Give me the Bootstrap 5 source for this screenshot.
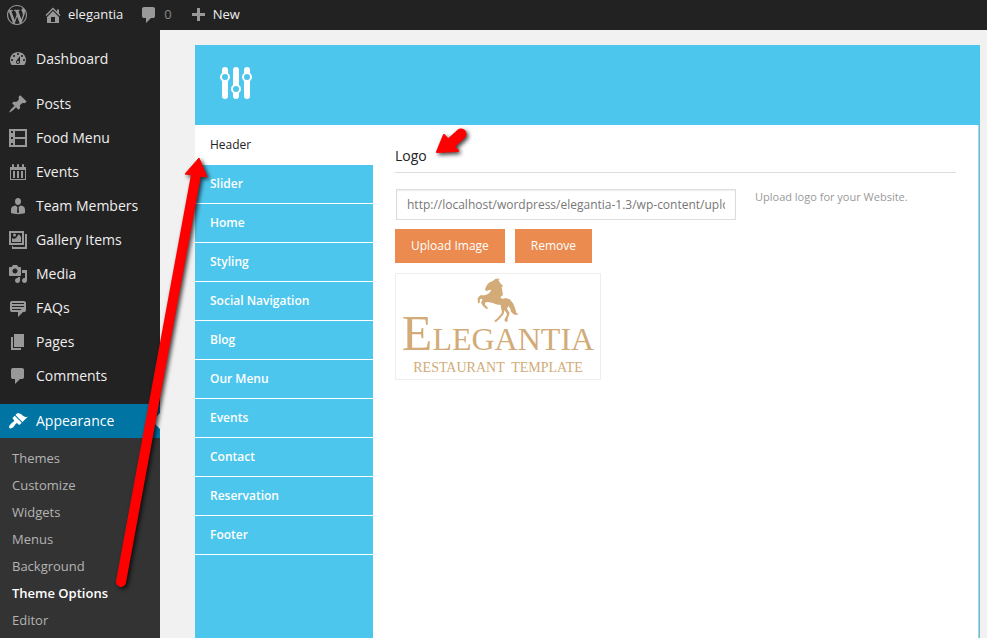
<!DOCTYPE html>
<html lang="en">
<head>
<meta charset="utf-8">
<meta name="viewport" content="width=device-width, initial-scale=1">
<title>Theme Options</title>
<link href="https://cdn.jsdelivr.net/npm/bootstrap@5.3.0/dist/css/bootstrap.min.css" rel="stylesheet">
<style>
body{font-family:"Open Sans","Noto Sans",sans-serif;font-size:14px;background:#f1f1f1;color:#333}
a{text-decoration:none}
svg{fill:#999;flex:none;display:block}
.admin-bar{background:#222;height:30px;font-size:13px;padding-left:7px}
.admin-bar a{color:#eee;gap:5px}
.admin-bar .count{color:#888}
.side-menu{background:#222;width:160px;padding-top:12px}
.side-menu .item{height:34px;padding:0 0 2px 8px;color:#eee}
.side-menu .item svg{margin-top:2px}
.side-menu .gap-item{margin-bottom:11px}
.side-menu .current{background:#0074a2;color:#fff}
.side-menu .current svg{fill:#fff}
.side-menu .current::after{content:"";position:absolute;right:0;top:9px;border:8px solid transparent;border-right-color:#f1f1f1}
.submenu{background:#333;padding:7px 12px;font-size:13px}
.submenu a{color:#b4b4b4;line-height:27px}
.submenu a.chosen{color:#fff;font-weight:600}
.main-area{padding:15px 7px 0 35px}
.panel-head{background:#4dc6ed;height:80px;padding:22px 25px}
.panel-head svg{fill:#fff}
.panel-body{background:#fff;border-right:1px solid #4dc6ed}
.tab-list{background:#4dc6ed;width:178px;font-size:12px}
.tab-list a{color:#fff;font-weight:600;line-height:38px;padding-left:15px;border-bottom:1px solid #fff}
.tab-list a.open{background:#fff;color:#222;font-weight:400;line-height:39px}
.options{border-right:1px solid #c8c8c8;padding:20px 22px}
.options h1{font-size:14px;line-height:22px;color:#222;padding-bottom:5px;border-bottom:1px solid #ddd;margin-bottom:16px}
.url-box{width:340px;height:31px;border:1px solid #ddd;border-radius:0;font-size:12px;color:#777;padding:0 10px;margin-left:1px;box-shadow:inset 0 1px 2px rgba(0,0,0,.07)}
.hint{font-size:11px;line-height:16px;color:#999;padding-left:19px}
.btn-row{gap:10px;margin:9px 0 10px}
.btn-flat{background:#ec8b4f;color:#fff;border:0;border-radius:0;font-size:12px;line-height:18px;padding:8px 16px}
.btn-flat:hover{background:#d97b41;color:#fff}
.brand-box{width:206px;height:107px;border:1px solid #eee;color:#d2ab78;font-family:"Liberation Serif",serif}
.brand-box svg{fill:#d2ab78}
.brand-name{font-size:32px;line-height:1;height:34px;margin-top:-14px}
.brand-name span{font-size:50px}
.brand-tag{font-size:14px;line-height:16px;white-space:pre;margin-top:18px}
.arrows{left:0;top:0;pointer-events:none;filter:drop-shadow(2px 2px 2px rgba(0,0,0,.75))}
.arrows path{fill:red}
.arrows line{stroke:red;stroke-linecap:round}
</style>
<script src="https://cdn.jsdelivr.net/npm/bootstrap@5.3.0/dist/js/bootstrap.bundle.min.js"></script>
</head>
<body>
<div class="d-flex flex-column min-vh-100 position-relative">
<header class="admin-bar d-flex align-items-center">
  <a href="#" aria-label="WordPress" class="pe-3"><svg width="20" height="20" viewBox="0 0 20 20"><path d="M20 10c0-5.51-4.49-10-10-10C4.48 0 0 4.49 0 10c0 5.52 4.48 10 10 10 5.51 0 10-4.48 10-10zM7.78 15.37L4.37 6.22c.55-.02 1.17-.08 1.17-.08.5-.06.44-1.13-.06-1.11 0 0-1.45.11-2.37.11-.18 0-.37 0-.58-.01C4.12 2.69 6.87 1.11 10 1.11c2.33 0 4.45.87 6.05 2.34-.68-.11-1.65.39-1.65 1.58 0 .74.45 1.36.9 2.1.35.61.55 1.36.55 2.46 0 1.49-1.4 5-1.4 5l-3.03-8.37c.54-.02.82-.17.82-.17.5-.05.44-1.25-.06-1.22 0 0-1.44.12-2.38.12-.87 0-2.33-.12-2.33-.12-.5-.03-.56 1.2-.06 1.22l.92.08 1.26 3.41zM17.41 10c.24-.64.74-1.87.43-4.25.7 1.29 1.05 2.71 1.05 4.25 0 3.29-1.73 6.24-4.4 7.78.97-2.59 1.94-5.2 2.92-7.78zM6.1 18.09C3.12 16.65 1.11 13.53 1.11 10c0-1.3.23-2.48.72-3.59C3.25 10.3 4.67 14.2 6.1 18.09zm4.03-6.63l2.58 6.98c-.86.29-1.76.45-2.71.45-.79 0-1.57-.11-2.29-.33.81-2.38 1.62-4.74 2.42-7.1z"/></svg></a>
  <a href="#" class="d-flex align-items-center pe-3"><svg width="20" height="20" viewBox="0 0 20 20"><path fill-rule="evenodd" d="M16 8.5l1.53 1.53-1.06 1.06L10 4.6l-6.47 6.49-1.06-1.06L10 2.5l4 4v-2h2v4zm-6-2.46l6 5.99V18H4v-5.97zM12 17v-5H8v5h4z"/></svg>elegantia</a>
  <a href="#" aria-label="Comments" class="d-flex align-items-center pe-3"><svg width="20" height="20" viewBox="0 0 20 20"><path d="M5 2h9q.82 0 1.41.59T16 4v7q0 .82-.59 1.41T14 13h-2l-5 5v-5H5q-.82 0-1.41-.59T3 11V4q0-.82.59-1.41T5 2z"/></svg><span class="count">0</span></a>
  <a href="#" class="d-flex align-items-center"><svg width="20" height="20" viewBox="0 0 20 20"><path d="M17 8v3h-5v5H9v-5H4V8h5V3h3v5h5z"/></svg>New</a>
</header>
<div class="d-flex flex-grow-1">
<nav class="side-menu flex-shrink-0 d-flex flex-column" aria-label="Admin menu">
  <a href="#" class="item gap-item d-flex align-items-center gap-2"><svg width="20" height="20" viewBox="0 0 20 20"><path d="M3.76 16h12.48c1.1-1.37 1.76-3.11 1.76-5 0-4.42-3.58-8-8-8s-8 3.58-8 8c0 1.89.66 3.63 1.76 5zM10 4c.55 0 1 .45 1 1s-.45 1-1 1-1-.45-1-1 .45-1 1-1zM6 6c.55 0 1 .45 1 1s-.45 1-1 1-1-.45-1-1 .45-1 1-1zm8 0c.55 0 1 .45 1 1s-.45 1-1 1-1-.45-1-1 .45-1 1-1zm-5.37 5.55L12 7v6c0 1.1-.9 2-2 2s-2-.9-2-2c0-.57.24-1.08.63-1.45zM4 10c.55 0 1 .45 1 1s-.45 1-1 1-1-.45-1-1 .45-1 1-1zm12 0c.55 0 1 .45 1 1s-.45 1-1 1-1-.45-1-1 .45-1 1-1zm-5 3c0-.55-.45-1-1-1s-1 .45-1 1 .45 1 1 1 1-.45 1-1z" fill-rule="evenodd"/></svg>Dashboard</a>
  <a href="#" class="item d-flex align-items-center gap-2"><svg width="20" height="20" viewBox="0 0 20 20"><path d="M10.44 3.02l1.82-1.82 6.36 6.35-1.83 1.82c-1.05-.68-2.48-.57-3.41.36l-.75.75c-.92.93-1.04 2.35-.35 3.41l-1.83 1.82-2.41-2.41-2.8 2.79c-.42.42-3.38 2.71-3.8 2.29s1.86-3.39 2.28-3.81l2.79-2.79L4.1 9.36l1.83-1.82c1.05.69 2.48.57 3.4-.36l.75-.75c.93-.92 1.05-2.35.36-3.41z"/></svg>Posts</a>
  <a href="#" class="item d-flex align-items-center gap-2"><svg width="20" height="20" viewBox="0 0 20 20"><path fill-rule="evenodd" d="M1 1h18v18H1zM7 3v6h10V3zM7 11v6h10v-6zM3 3v2h2V3zM3 9v2h2V9zM3 15v2h2v-2z"/></svg>Food Menu</a>
  <a href="#" class="item d-flex align-items-center gap-2"><svg width="20" height="20" viewBox="0 0 20 20"><path fill-rule="evenodd" d="M2 5h2V3q0-1 1-1t1 1v2h3V3q0-1 1-1t1 1v2h3V3q0-1 1-1t1 1v2h2v13H2zM3 8v9h14V8zM5 9h2v7H5zM9 9h2v7H9zM13 9h2v7h-2z"/></svg>Events</a>
  <a href="#" class="item d-flex align-items-center gap-2"><svg width="20" height="20" viewBox="0 0 20 20"><path fill-rule="evenodd" d="M10 2c2 0 3 1.500 3 3.500S11.700 9 10 9 7 7.500 7 5.500 8 2 10 2zM7.500 9.500 9.400 11 9 16l1 1.500 1-1.500-.4-5 1.900-1.500c3 .5 4.500 1.500 4.500 4.500v3c-4 1.500-10 1.500-14 0v-3c0-3 1.500-4 4.500-4.500z"/></svg>Team Members</a>
  <a href="#" class="item d-flex align-items-center gap-2"><svg width="20" height="20" viewBox="0 0 20 20"><path fill-rule="evenodd" d="M1 1h15v14H1zM3 3v10h11V3zM4 12V8l2 1 2-1 3-4 2 3v5zM5 5a1.500 1.500 0 1 1 3 0 1.500 1.500 0 1 1-3 0zM17 4h2v15H4v-3h1v1h12z"/></svg>Gallery Items</a>
  <a href="#" class="item d-flex align-items-center gap-2"><svg width="20" height="20" viewBox="0 0 20 20"><path d="M13 11V4c0-.55-.45-1-1-1h-1.670L9 1H5L3.670 3H2c-.55 0-1 .45-1 1v7c0 .55.45 1 1 1h10c.55 0 1-.45 1-1zM7 4.500c1.380 0 2.500 1.120 2.500 2.500S8.380 9.500 7 9.500 4.500 8.380 4.500 7 5.620 4.500 7 4.500zM14 6h5v10.500c0 1.380-1.120 2.500-2.500 2.500S14 17.880 14 16.500s1.120-2.500 2.500-2.500c.17 0 .34.02.5.05V9h-3V6zm-4 8.050V13h2v3.500c0 1.380-1.120 2.500-2.500 2.500S7 17.880 7 16.500 8.120 14 9.500 14c.17 0 .34.02.5.05z" fill-rule="evenodd"/></svg>Media</a>
  <a href="#" class="item d-flex align-items-center gap-2"><svg width="20" height="20" viewBox="0 0 20 20"><path fill-rule="evenodd" d="M4 3h12c.55 0 1.020.2 1.410.59S18 4.450 18 5v7c0 .55-.2 1.020-.59 1.410S16.550 14 16 14h-1l-5 5v-5H4c-.55 0-1.020-.2-1.410-.59S2 12.550 2 12V5c0-.55.2-1.020.59-1.410S3.450 3 4 3zm12 2H4v1h12V5zm0 3H4v1h12V8zm-3 3H4v1h9v-1z"/></svg>FAQs</a>
  <a href="#" class="item d-flex align-items-center gap-2"><svg width="20" height="20" viewBox="0 0 20 20"><path d="M6 15V2h10v13H6zm-1 1h8v2H3V5h2v11z"/></svg>Pages</a>
  <a href="#" class="item gap-item d-flex align-items-center gap-2"><svg width="20" height="20" viewBox="0 0 20 20"><path d="M5 2h9q.82 0 1.410.59T16 4v7q0 .82-.59 1.410T14 13h-2l-5 5v-5H5q-.82 0-1.410-.59T3 11V4q0-.82.59-1.410T5 2z"/></svg>Comments</a>
  <a href="#" class="item current position-relative d-flex align-items-center gap-2"><svg width="20" height="20" viewBox="0 0 20 20"><path d="M14.480 11.060L7.410 3.990l1.500-1.500c.5-.56 2.300-.47 3.510.32 1.210.8 1.430 1.280 2.910 2.100 1.180.64 2.450 1.260 4.450.85zm-.71.71L6.700 4.700 4.930 6.470c-.39.39-.39 1.020 0 1.410l1.060 1.060c.39.39.39 1.030 0 1.420-.6.6-1.430 1.110-2.210 1.690-.35.26-.7.53-1.010.84C1.430 14.230.4 16.080 1.400 17.070c.99 1 2.840-.03 4.180-1.360.31-.31.58-.66.85-1.020.57-.78 1.080-1.610 1.690-2.210.39-.39 1.020-.39 1.410 0l1.060 1.060c.39.39 1.020.39 1.410 0z"/></svg>Appearance</a>
  <div class="submenu d-flex flex-column flex-grow-1">
    <a href="#">Themes</a><a href="#">Customize</a><a href="#">Widgets</a><a href="#">Menus</a><a href="#">Background</a><a href="#" class="chosen">Theme Options</a><a href="#">Editor</a>
  </div>
</nav>
<main class="main-area flex-grow-1 d-flex flex-column">
  <div class="panel-head"><svg width="32" height="32" viewBox="0 0 32 32"><rect x="2" width="6" height="32" rx="3"/><rect x="13" width="6" height="32" rx="3"/><rect x="24" width="6" height="32" rx="3"/><g fill="#4dc6ed" stroke="#fff" stroke-width="2"><circle cx="5" cy="10" r="4"/><circle cx="16" cy="22" r="4"/><circle cx="27" cy="10" r="4"/></g></svg></div>
  <div class="panel-body d-flex flex-grow-1">
    <nav class="tab-list flex-shrink-0 d-flex flex-column" aria-label="Option sections">
      <a href="#" class="open">Header</a><a href="#">Slider</a><a href="#">Home</a><a href="#">Styling</a><a href="#">Social Navigation</a><a href="#">Blog</a><a href="#">Our Menu</a><a href="#">Events</a><a href="#">Contact</a><a href="#">Reservation</a><a href="#">Footer</a>
    </nav>
    <section class="options flex-grow-1">
      <h1 class="fw-normal" id="logo-title">Logo</h1>
      <div class="d-flex">
        <input type="text" class="url-box form-control" aria-labelledby="logo-title" value="http://localhost/wordpress/elegantia-1.3/wp-content/uploads/logo.png">
        <p class="hint mb-0">Upload logo for your Website.</p>
      </div>
      <div class="btn-row d-flex">
        <button type="button" class="btn btn-flat">Upload Image</button>
        <button type="button" class="btn btn-flat">Remove</button>
      </div>
      <div class="brand-box d-flex flex-column align-items-center pt-1">
        <svg width="42" height="44" viewBox="22 20 126 132" aria-hidden="true"><path d="M78 22 70 28 64 31C55 34 50 42 46 54L50 60 56 57 64 55C64 62 56 68 46 72L32 72 24 80 25 96 30 95 31 84 36 82C40 84 38 88 34 94L40 104 50 113 56 111 46 100 46 94C56 90 60 94 72 96 82 102 90 100 94 102 92 110 98 116 96 126L84 140 74 148 78 153 90 142 102 128 104 116 110 124 112 130 104 146 108 152 114 150 114 142 120 126 112 112 116 104 122 112 124 122 134 130 147 130 140 124 136 110 130 96 120 84 108 80C100 82 96 84 92 78L100 70 98 60 96 48 100 44 92 36 86 26 92 22Z"/></svg>
        <div class="brand-name"><span>E</span>LEGANTIA</div>
        <div class="brand-tag">RESTAURANT  TEMPLATE</div>
      </div>
    </section>
  </div>
</main>
</div>
<svg class="arrows position-absolute" width="480" height="600" viewBox="0 0 480 600" aria-hidden="true">
  <line x1="121" y1="582" x2="196" y2="175" stroke-width="10"/>
  <path d="M199 158 207 177 185 174Z" stroke="red" stroke-linejoin="round"/>
  <line x1="461" y1="134" x2="450" y2="144" stroke-width="11"/>
  <path d="M437 152 444 135 458 151Z" stroke="red" stroke-width="2" stroke-linejoin="round"/>
</svg>
</div>
</body>
</html>
